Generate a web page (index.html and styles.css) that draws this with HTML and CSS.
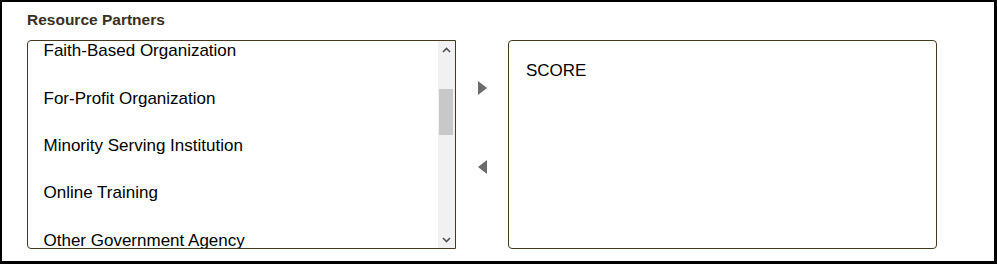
FILE: index.html
```html
<!DOCTYPE html>
<html lang="en">
<head>
<meta charset="utf-8">
<title>Resource Partners</title>
<link rel="stylesheet" href="styles.css">
</head>
<body>
<div class="panel">
  <div class="title">Resource Partners</div>
  <div class="picker">
    <div class="listbox">
      <div class="viewport">
        <ul class="options">
          <li>Faith-Based Organization</li>
          <li>For-Profit Organization</li>
          <li>Minority Serving Institution</li>
          <li>Online Training</li>
          <li>Other Government Agency</li>
        </ul>
      </div>
      <div class="scrollbar">
        <div class="sb-btn">
          <svg width="9" height="6" viewBox="0 0 9 6"><polyline points="1,5 4.5,1.5 8,5" fill="none" stroke="#505050" stroke-width="1.6"/></svg>
        </div>
        <div class="sb-track"><div class="sb-thumb"></div></div>
        <div class="sb-btn">
          <svg width="9" height="6" viewBox="0 0 9 6"><polyline points="1,1 4.5,4.5 8,1" fill="none" stroke="#505050" stroke-width="1.6"/></svg>
        </div>
      </div>
    </div>
    <div class="movers">
      <div class="tri tri-right"></div>
      <div class="tri tri-left"></div>
    </div>
    <div class="selected">
      <div class="sel-item">SCORE</div>
    </div>
  </div>
</div>
</body>
</html>
```
FILE: styles.css
```css
html, body {
  margin: 0;
  padding: 0;
  background: #fff;
}
.panel {
  box-sizing: border-box;
  width: 997px;
  height: 264px;
  border: 2px solid #000;
  border-right-width: 3px;
  border-bottom-width: 3px;
  padding: 9px 0 0 25px;
  font-family: "Liberation Sans", Arial, sans-serif;
}
.title {
  font-weight: bold;
  font-size: 15.5px;
  line-height: 18px;
  color: #3a2f1d;
  margin-bottom: 11px;
}
.picker {
  display: flex;
  align-items: flex-start;
}
.listbox {
  box-sizing: border-box;
  width: 429px;
  height: 209px;
  border: 1px solid #45391d;
  border-radius: 4px 0 0 4px;
  display: flex;
  overflow: hidden;
}
.viewport {
  flex: 1;
  overflow: hidden;
}
.options {
  list-style: none;
  margin: -13.8px 0 0 0;
  padding: 0 0 0 15.5px;
}
.options li {
  font-size: 17px;
  line-height: 47.4px;
  color: #000;
  white-space: nowrap;
}
.scrollbar {
  width: 17px;
  background: #f1f1f1;
  display: flex;
  flex-direction: column;
}
.sb-btn {
  height: 17px;
  display: flex;
  align-items: center;
  justify-content: center;
}
.sb-track {
  flex: 1;
  padding: 31px 2px 0 1px;
}
.sb-thumb {
  height: 46px;
  background: #c8c8c8;
}
.movers {
  width: 52px;
  display: flex;
  flex-direction: column;
  align-items: center;
  padding-top: 41px;
  gap: 65px;
}
.tri {
  width: 0;
  height: 0;
  border-top: 7px solid transparent;
  border-bottom: 7px solid transparent;
}
.tri-right {
  border-left: 9px solid #6b6b6b;
}
.tri-left {
  border-right: 9px solid #6b6b6b;
}
.selected {
  box-sizing: border-box;
  width: 429px;
  height: 209px;
  border: 1px solid #45391d;
  border-radius: 4px;
  padding: 19.5px 0 0 17px;
}
.sel-item {
  font-size: 17px;
  color: #000;
}
```
